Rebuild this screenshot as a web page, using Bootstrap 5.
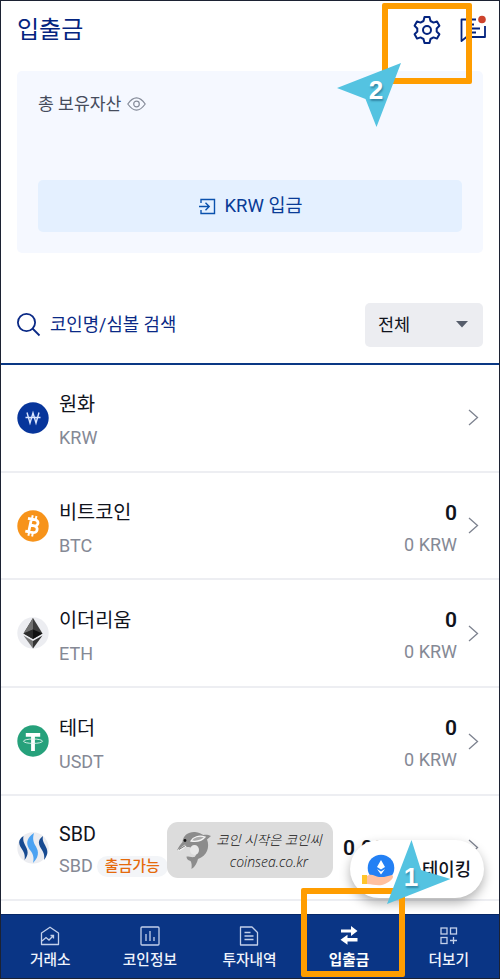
<!DOCTYPE html>
<html lang="ko">
<head>
  <meta charset="UTF-8">
  <meta name="viewport" content="width=device-width, initial-scale=1">
  <title>입출금</title>
  <link href="https://cdn.jsdelivr.net/npm/bootstrap@5.3.0/dist/css/bootstrap.min.css" rel="stylesheet">
  <style>
    body {
      font-family: Roboto, 'Noto Sans CJK KR', sans-serif;
      color: #10131c;
      background-color: #fff;
    }

    .app-screen {
      width: 500px;
      height: 979px;
      border: 1px solid #1c2233;
      overflow: hidden;
    }

    svg {
      display: block;
      flex-shrink: 0;
    }

    .app-header {
      height: 70px;
      padding: 0 12px 12px 16px;
    }

    .app-title {
      font-size: 24px;
      color: #04247f;
    }

    .asset-box {
      height: 182px;
      margin: 0 16px;
      padding: 20px 21px 21px;
      border-radius: 5px;
      background-color: #f5f8ff;
    }

    .asset-label {
      font-size: 17.2px;
      line-height: 26px;
      color: #454c5c;
    }

    .asset-label svg {
      margin-left: 6px;
    }

    .btn-deposit {
      height: 52px;
      padding: 2px 0 0 2px;
      border: 0;
      border-radius: 5px;
      background-color: #e4f0ff;
      color: #0a3b96;
      font-size: 18.5px;
    }

    .search-bar {
      height: 112px;
      padding: 50px 16px 0;
      border-bottom: 2px solid #0a3884;
      color: #0a2986;
      font-size: 17.8px;
    }

    .search-label {
      margin-left: 9px;
      padding-top: 2px;
    }

    .filter-box {
      width: 118px;
      height: 44px;
      padding: 0 15px 0 13px;
      border-radius: 5px;
      background-color: #ecedf1;
      color: #10131c;
      font-size: 17.5px;
    }

    .coin-row {
      height: 108px;
      padding: 0 20px 0 16px;
      border-bottom: 2px solid #edeef2;
    }

    .coin-row-short {
      height: 105px;
    }

    .coin-label {
      margin-left: 10px;
      padding-top: 7px;
    }

    .coin-value {
      margin-right: 11px;
      padding-top: 5px;
    }

    .coin-name {
      font-size: 19.7px;
      line-height: 28px;
      margin-bottom: 6px;
    }

    .coin-row-short .coin-name {
      margin-bottom: 4px;
    }

    .coin-row-short .coin-label {
      padding-top: 5px;
    }

    .coin-code {
      font-size: 18px;
      line-height: 26px;
      color: #858995;
    }

    .coin-amount {
      font-size: 21px;
      font-weight: 600;
      line-height: 28px;
      margin-bottom: 5px;
    }

    .tag-out {
      height: 21px;
      padding: 0 8px;
      border-radius: 11px;
      background-color: #f3f5f8;
      color: #e56a0c;
      font-size: 15px;
      font-weight: 500;
      line-height: 20px;
    }

    .tab-bar {
      height: 64px;
      margin-top: 13px;
      background-color: #0a3585;
      border-top: 1px solid #062767;
      color: #f0f4fc;
      font-size: 14.7px;
      font-weight: 500;
    }

    .tab-item {
      width: 100px;
      padding-top: 11px;
      padding-right: 1px;
      line-height: 20px;
    }

    .tab-item svg {
      margin-bottom: 4px;
    }

    /* things lying over the screen */
    .over {
      position: absolute;
    }

    .frame-top {
      left: 382px;
      top: 3px;
      width: 90px;
      height: 81px;
      border: 6px solid #ff9d00;
      border-radius: 2px;
    }

    .frame-bottom {
      left: 301px;
      top: 888px;
      width: 104px;
      height: 89px;
      border: 6px solid #ff9d00;
      border-radius: 2px;
    }

    .arrow-top {
      left: 335px;
      top: 60px;
    }

    .arrow-bottom {
      left: 380px;
      top: 835px;
    }

    .step-number {
      font: bold 26px 'Liberation Sans', sans-serif;
      fill: #fff;
      text-shadow: 1px 2px 2px rgba(0, 50, 80, .4);
    }

    .float-pill {
      left: 350px;
      top: 840px;
      width: 134px;
      height: 58px;
      padding: 3px 13px 0 11px;
      border-radius: 29px;
      background-color: #fff;
      box-shadow: 0 5px 11px rgba(0, 0, 0, .3);
      font-size: 17.8px;
      font-weight: 500;
    }

    .watermark {
      left: 167px;
      top: 822px;
      width: 166px;
      height: 56px;
      padding-left: 9px;
      border-radius: 11px;
      background-color: #dcdcdc;
      color: #111;
      font-style: italic;
      font-size: 13.4px;
      line-height: 21px;
    }

    .watermark-text {
      width: 114px;
      padding-top: 2px;
      font-family: 'Open Sans', 'Noto Sans CJK KR', sans-serif;
      font-weight: 300;
      white-space: nowrap;
    }

    .watermark-url {
      font-size: 14px;
    }
  </style>
</head>
<body>

  <div class="app-screen position-relative d-flex flex-column">

    <!-- Header -->
    <header class="app-header d-flex align-items-center justify-content-between">
      <div class="app-title">입출금</div>
      <div class="d-flex align-items-center">
        <svg width="28" height="30" viewBox="0 0 28 30" fill="none" stroke="#04247f" stroke-width="2" stroke-linejoin="round">
          <path d="M11.500 2h5l1 4 3 1.600 3.500-1.200 2.400 4.400-2.700 2.700v3l2.700 2.700-2.400 4.400-3.500-1.200-3 1.600-1 4h-5l-1-4-3-1.600L4 23.600l-2.400-4.400 2.700-2.700v-3l-2.700-2.700L4 6.400l3.500 1.200 3-1.600z"/>
          <circle cx="14" cy="15" r="4"/>
        </svg>
        <svg class="ms-3" width="30" height="32" viewBox="0 0 30 32" fill="none" stroke="#04247f" stroke-width="1.800">
          <path d="M19 5.500H4.500V27l5-4H28V12M9 10.500h8M9 14.500h14M9 18.500h10" stroke-linejoin="round"/>
          <circle cx="25" cy="5.500" r="3.800" fill="#cd432d" stroke="none"/>
        </svg>
      </div>
    </header>

    <!-- Total assets -->
    <section class="asset-box d-flex flex-column justify-content-between">
      <div class="asset-label d-flex align-items-center">총 보유자산
        <svg width="19" height="14" viewBox="0 0 19 14" fill="none" stroke="#858b99" stroke-width="1.200">
          <path d="M.8 7Q9.500-5.200 18.200 7 9.500 19.200.8 7z"/>
          <circle cx="9.500" cy="7" r="2.800"/>
        </svg>
      </div>
      <button type="button" class="btn-deposit d-flex align-items-center justify-content-center">
        <svg class="me-2" width="17" height="17" viewBox="0 0 17 17" fill="none" stroke="#0a51ad" stroke-width="1.400">
          <path d="M2 5V1.500h13.500v14H2V12M0 8.500h10M6.500 4.800l3.700 3.700-3.700 3.700"/>
        </svg>
        KRW 입금
      </button>
    </section>

    <!-- Search and filter -->
    <div class="search-bar d-flex align-items-start justify-content-between">
      <div class="d-flex align-items-center h-100 pb-3">
        <svg width="24" height="24" viewBox="0 0 24 24" fill="none" stroke="#0a2986" stroke-width="1.800">
          <circle cx="9.500" cy="9.500" r="8.600"/>
          <path d="M15.500 15.500l7 7"/>
        </svg>
        <span class="search-label">코인명/심볼 검색</span>
      </div>
      <div class="filter-box d-flex align-items-center justify-content-between">
        전체
        <svg width="12" height="7" viewBox="0 0 12 7"><path d="M0 0h12L6 6.500z" fill="#565d6b"/></svg>
      </div>
    </div>

    <!-- Coin list -->
    <div class="coin-row d-flex align-items-center">
      <svg width="32" height="32" viewBox="0 0 32 32">
        <circle cx="16" cy="16" r="15.700" fill="#07359b"/>
        <path d="M10 10.500l3 10.500 3-10 3 10 3-10.500M8.500 15.500h15" fill="none" stroke="#dce6ff" stroke-width="1.400"/>
      </svg>
      <div class="coin-label flex-grow-1">
        <div class="coin-name">원화</div>
        <div class="coin-code">KRW</div>
      </div>
      <svg width="11" height="17" viewBox="0 0 11 17" fill="none" stroke="#7d828f" stroke-width="1.300"><path d="M1 1l8.500 7.500L1 16"/></svg>
    </div>

    <div class="coin-row d-flex align-items-center">
      <svg width="32" height="32" viewBox="0 0 32 32">
        <circle cx="16" cy="16" r="15.700" fill="#f7931a"/>
        <g transform="rotate(12 16 16)" fill="none" stroke="#fff">
          <path d="M9.500 9.500h7.800a3 3 0 0 1 0 6H13M17.300 15.500a3.500 3.500 0 0 1 0 7H9.500M13 9.500v13" stroke-width="2.800"/>
          <path d="M13.500 5.500v4M17.300 5.500v4M13.500 22.500v4M17.300 22.500v4" stroke-width="2"/>
        </g>
      </svg>
      <div class="coin-label flex-grow-1">
        <div class="coin-name">비트코인</div>
        <div class="coin-code">BTC</div>
      </div>
      <div class="coin-value text-end">
        <div class="coin-amount">0</div>
        <div class="coin-code">0 KRW</div>
      </div>
      <svg width="11" height="17" viewBox="0 0 11 17" fill="none" stroke="#7d828f" stroke-width="1.300"><path d="M1 1l8.500 7.500L1 16"/></svg>
    </div>

    <div class="coin-row d-flex align-items-center">
      <svg width="32" height="32" viewBox="0 0 32 32">
        <circle cx="16" cy="16" r="15.700" fill="#ecedf1"/>
        <path d="M16 1l9.500 15.500L16 22l-9.500-5.500z" fill="#3c3c3c"/>
        <path d="M16 1v11.500l-9.500 4z" fill="#707070"/>
        <path d="M16 12.500l9.500 4L16 22z" fill="#111"/>
        <path d="M16 12.500l-9.500 4L16 22z" fill="#2b2b2b"/>
        <path d="M6.500 18.500L16 24v7.500z" fill="#777"/>
        <path d="M25.500 18.500L16 24v7.500z" fill="#333"/>
      </svg>
      <div class="coin-label flex-grow-1">
        <div class="coin-name">이더리움</div>
        <div class="coin-code">ETH</div>
      </div>
      <div class="coin-value text-end">
        <div class="coin-amount">0</div>
        <div class="coin-code">0 KRW</div>
      </div>
      <svg width="11" height="17" viewBox="0 0 11 17" fill="none" stroke="#7d828f" stroke-width="1.300"><path d="M1 1l8.500 7.500L1 16"/></svg>
    </div>

    <div class="coin-row d-flex align-items-center">
      <svg width="32" height="32" viewBox="0 0 32 32">
        <circle cx="16" cy="16" r="15.700" fill="#26a17b"/>
        <path d="M8.800 8h14.400v3.800h-5.300V26h-3.800V11.800H8.800z" fill="#fff"/>
        <ellipse cx="16" cy="16.200" rx="9.500" ry="2.200" fill="none" stroke="#e4f5ef" stroke-width=".9"/>
      </svg>
      <div class="coin-label flex-grow-1">
        <div class="coin-name">테더</div>
        <div class="coin-code">USDT</div>
      </div>
      <div class="coin-value text-end">
        <div class="coin-amount">0</div>
        <div class="coin-code">0 KRW</div>
      </div>
      <svg width="11" height="17" viewBox="0 0 11 17" fill="none" stroke="#7d828f" stroke-width="1.300"><path d="M1 1l8.500 7.500L1 16"/></svg>
    </div>

    <div class="coin-row coin-row-short d-flex align-items-center">
      <svg width="32" height="32" viewBox="0 0 32 32">
        <circle cx="16" cy="16" r="15.700" fill="#ecedf1"/>
        <path d="M6.500 4C-1 9 3 14 5.500 18 8 22 8 25 7.500 28 13 21 10 17 8 13 6 9 6 7 6.500 4z" fill="#174a91"/>
        <path d="M17 1C7 8 10.500 14 13 18c4 5 4 9 3 13 8-8 4.500-14 2-18C15.500 8 16 5 17 1z" fill="#4ba2f2"/>
        <path d="M26 4c-7 5-3.500 10-1 14 2.500 4 2.500 7 2 10 5.500-7 3-11 1-15C25.500 9 25.500 7 26 4z" fill="#174a91"/>
      </svg>
      <div class="coin-label flex-grow-1">
        <div class="coin-name">SBD</div>
        <div class="coin-code d-flex align-items-center">SBD <span class="tag-out ms-1">출금가능</span></div>
      </div>
      <div class="coin-value text-end">
        <div class="coin-amount">0.00000000</div>
      </div>
      <svg width="11" height="17" viewBox="0 0 11 17" fill="none" stroke="#7d828f" stroke-width="1.300"><path d="M1 1l8.500 7.500L1 16"/></svg>
    </div>

    <!-- Tab bar -->
    <nav class="tab-bar d-flex">
      <div class="tab-item d-flex flex-column align-items-center">
        <svg width="20" height="20" viewBox="0 0 20 20" fill="none" stroke="#c3d0ea" stroke-width="1.300">
          <path d="M1.500 7L10 1.200 18.500 7v11.500h-17z" stroke-linejoin="round"/>
          <path d="M2 15l4-3.500 3 2.500 4.500-4.500M10.500 9.500h3v3"/>
        </svg>
        거래소
      </div>
      <div class="tab-item d-flex flex-column align-items-center">
        <svg width="20" height="20" viewBox="0 0 20 20" fill="none" stroke="#c3d0ea" stroke-width="1.300">
          <rect x="1" y="1" width="18" height="18" rx="1"/>
          <path d="M6 8v7M10 5v10M14 11v4"/>
        </svg>
        코인정보
      </div>
      <div class="tab-item d-flex flex-column align-items-center">
        <svg width="20" height="20" viewBox="0 0 20 20" fill="none" stroke="#c3d0ea" stroke-width="1.300">
          <path d="M1.500 1H13l5.500 5.500V19h-17z" stroke-linejoin="round"/>
          <path d="M5.500 6.500h6M5.500 10h9M5.500 13.500h9"/>
        </svg>
        투자내역
      </div>
      <div class="tab-item d-flex flex-column align-items-center fw-bold text-white">
        <svg width="20" height="20" viewBox="0 0 20 20" fill="#fff">
          <path d="M2 3.500h10V0L18.500 5 12 10V6.500H2zM18.500 12H8.500V8.800L1.500 13.800l7 5V15.500h10z"/>
        </svg>
        입출금
      </div>
      <div class="tab-item d-flex flex-column align-items-center">
        <svg width="20" height="20" viewBox="0 0 20 20" fill="none" stroke="#c3d0ea" stroke-width="1.300">
          <rect x="2" y="2" width="6" height="6"/>
          <rect x="11.500" y="2" width="6" height="6"/>
          <rect x="2" y="11.500" width="6" height="6"/>
          <path d="M14.500 11v7M11 14.500h7"/>
        </svg>
        더보기
      </div>
    </nav>
  </div>

  <!-- Watermark -->
  <div class="over watermark d-flex align-items-center">
    <svg width="36" height="40" viewBox="0 0 36 40">
      <path d="M1 20.500C3 16 5 14 6.500 12 7 5 13 1.500 19 2c4 .3 6.500 2 8.500 3 3-.5 5 0 7.500 1l-4 3.500C34 17 31 26 22 29c-1 4-3 8-6.500 10 .5-4 0-6.500-1-8-3-1-4-2.500-4-4.500 3 0 5 1 8 .5 3-2.500 2-5-1-8-3-2-6-2.500-9-1.500z" fill="#8c8c8c"/>
      <path d="M1 20.500l8-6 1.500 2-6 4z" fill="#f4f4f4"/>
      <path d="M3 19.500l6.500-4" stroke="#555" stroke-width=".8"/>
      <path d="M15 11c2-4 8-6 14-4-3 3.500-8 5-14 4z" fill="#aaa" stroke="#f4f4f4" stroke-width="1.300"/>
      <ellipse cx="18.500" cy="20" rx="4.500" ry="5" fill="#e8e8e8"/>
      <circle cx="9" cy="10.500" r="1.400" fill="#111"/>
    </svg>
    <div class="watermark-text text-center">코인 시작은 코인씨<div class="watermark-url">coinsea.co.kr</div></div>
  </div>

  <!-- Staking button -->
  <div class="over float-pill d-flex align-items-center justify-content-between">
    <svg width="34" height="34" viewBox="0 0 34 34">
      <circle cx="20" cy="14" r="13.300" fill="#2380f4"/>
      <path d="M20 6l4 7-4 2.500-4-2.500zM16 15l4 2.500 4-2.500-4 5.500z" fill="#fff"/>
      <path d="M6 22c4-3 8 0 12 1h5l8-2c4 3-5 9-10 10-6 1-9-1-15-1z" fill="#ffc0a0"/>
      <path d="M1 21h5v9H1z" fill="#ffc52c"/>
    </svg>
    스테이킹
  </div>

  <!-- Step frames and arrows -->
  <div class="over frame-top"></div>
  <div class="over frame-bottom"></div>
  <svg class="over arrow-top" width="70" height="72" viewBox="0 0 70 72">
    <path d="M66 3L2 28l28.500 11L41.500 67z" fill="#54c3e1"/>
    <text class="step-number" x="41" y="39" text-anchor="middle">2</text>
  </svg>
  <svg class="over arrow-bottom" width="72" height="72" viewBox="0 0 72 72">
    <path d="M31.500 5L41 35l29.500 9L7 69z" fill="#54c3e1"/>
    <text class="step-number" x="31" y="51" text-anchor="middle">1</text>
  </svg>

  <script src="https://cdn.jsdelivr.net/npm/bootstrap@5.3.0/dist/js/bootstrap.bundle.min.js"></script>
</body>
</html>
